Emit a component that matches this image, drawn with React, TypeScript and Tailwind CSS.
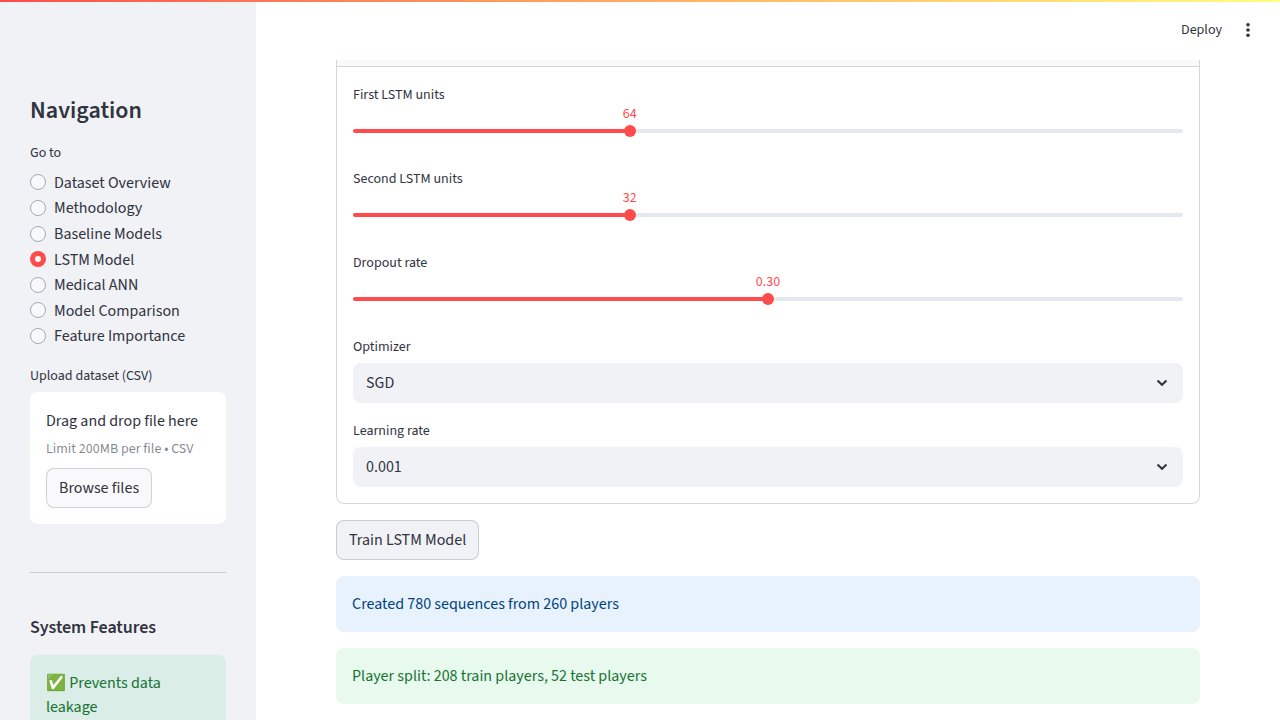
import React from "react";

const pages = [
  "Dataset Overview",
  "Methodology",
  "Baseline Models",
  "LSTM Model",
  "Medical ANN",
  "Model Comparison",
  "Feature Importance",
];

function Radio({ label, checked }: { label: string; checked: boolean }) {
  return (
    <label className="flex h-[25.6px] items-center gap-2">
      {checked ? (
        <span className="mb-[0.8px] flex size-4 items-center justify-center rounded-full bg-[#ff4b4b]">
          <span className="size-1.5 rounded-full bg-white" />
        </span>
      ) : (
        <span className="mb-[0.8px] size-4 rounded-full border border-[#a3a8b4] bg-[#f9f9fb]" />
      )}
      <span>{label}</span>
    </label>
  );
}

function Label({ children }: { children: React.ReactNode }) {
  return <div className="flex h-6 items-center text-sm leading-[22.4px]">{children}</div>;
}

function Slider({ label, value, percent }: { label: string; value: string; percent: number }) {
  return (
    <div className="h-[68px]">
      <Label>{label}</Label>
      <div className="relative mt-[22px] h-1 rounded-full bg-[#e4e9f0]">
        <div className="h-1 rounded-full bg-[#ff4b4b]" style={{ width: `${percent}%` }} />
        <div
          className="absolute -top-1 -ml-1.5 size-3 rounded-full bg-[#ff4b4b]"
          style={{ left: `${percent}%` }}
        />
        <div
          className="absolute bottom-2 -translate-x-1/2 text-sm leading-[22px] text-[#ff4b4b]"
          style={{ left: `${percent}%` }}
        >
          {value}
        </div>
      </div>
    </div>
  );
}

function Select({ label, value }: { label: string; value: string }) {
  return (
    <div>
      <Label>{label}</Label>
      <div className="mt-1 flex h-10 items-center justify-between rounded-lg bg-[#f0f2f6] px-[13px]">
        <span>{value}</span>
        <svg viewBox="0 0 16 16" className="size-4" fill="none" stroke="#31333f" strokeWidth="2.1">
          <path d="M3.5 5.6 8 9.8l4.5-4.2" />
        </svg>
      </div>
    </div>
  );
}

export default function App() {
  return (
    <div className="flex h-[720px] w-[1280px] flex-col overflow-hidden bg-white font-['Source_Sans_Pro','Source_Sans_3','Noto_Sans_CJK_SC',sans-serif] text-base text-[#31333f]">
      <div className="h-0.5 shrink-0 bg-linear-to-r from-[#ff4b4b] to-[#fffd80]" />
      <div className="flex min-h-0 flex-1">
        <aside className="w-64 shrink-0 overflow-hidden bg-[#f0f2f6] px-[30px] pt-[94px]">
          <h2 className="text-2xl leading-[29px] font-semibold">Navigation</h2>
          <div className="mt-4">
            <Label>Go to</Label>
          </div>
          <div className="mt-[5px]">
            {pages.map((page) => (
              <Radio key={page} label={page} checked={page === "LSTM Model"} />
            ))}
          </div>
          <div className="mt-[15px]">
            <Label>Upload dataset (CSV)</Label>
          </div>
          <div className="mt-1 h-[132px] rounded-lg bg-white px-4 pt-[17px]">
            <div className="leading-[25.6px]">Drag and drop file here</div>
            <div className="mt-[3px] text-sm leading-[22px] whitespace-nowrap text-[#31333f]/60">Limit 200MB per file • CSV</div>
            <button className="mt-2 h-10 rounded-lg border border-[#31333f]/20 bg-[#f9f9fb] px-3">Browse files</button>
          </div>
          <hr className="mt-12 border-[#31333f]/20" />
          <h3 className="mt-11 text-lg leading-[22px] font-semibold tracking-[-0.07px]">System Features</h3>
          <div className="mt-4 h-24 rounded-lg bg-[#daede6] p-4 leading-6 text-[#177233]">✅ Prevents data leakage</div>
        </aside>
        <main className="flex min-w-0 flex-1 flex-col px-20">
          <header className="-mr-14 flex h-[58px] shrink-0 items-center justify-end gap-[18px] pb-0.5">
            <span className="text-sm">Deploy</span>
            <svg viewBox="0 0 16 16" className="size-4" fill="#31333f">
              <circle cx="8" cy="2.8" r="1.8" />
              <circle cx="8" cy="8" r="1.8" />
              <circle cx="8" cy="13.2" r="1.8" />
            </svg>
          </header>
          <section className="shrink-0 rounded-b-lg border-x border-b border-[#31333f]/20">
            <div className="h-[7px] border-b border-[#31333f]/20 bg-[#f8f9fb]" />
            <div className="flex flex-col gap-4 p-4">
              <Slider label="First LSTM units" value="64" percent={33.3333} />
              <Slider label="Second LSTM units" value="32" percent={33.3333} />
              <Slider label="Dropout rate" value="0.30" percent={50} />
              <Select label="Optimizer" value="SGD" />
              <Select label="Learning rate" value="0.001" />
            </div>
          </section>
          <button className="mt-4 h-10 shrink-0 self-start rounded-lg border border-[#31333f]/20 bg-[#f0f2f6] px-3">Train LSTM Model</button>
          <div className="mt-4 shrink-0 rounded-lg bg-[#e8f2fc] p-4 text-[#004280]">Created 780 sequences from 260 players</div>
          <div className="mt-4 shrink-0 rounded-lg bg-[#e8f9ee] p-4 text-[#177233]">Player split: 208 train players, 52 test players</div>
        </main>
      </div>
    </div>
  );
}
